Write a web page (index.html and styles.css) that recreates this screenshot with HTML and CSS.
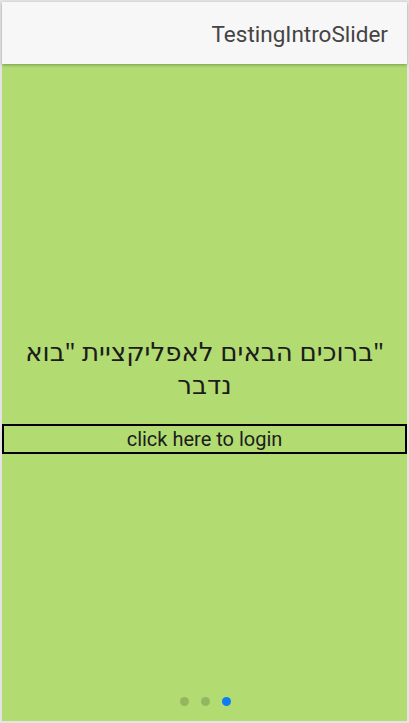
FILE: index.html
```html
<!DOCTYPE html>
<html lang="he">
<head>
<meta charset="utf-8">
<link rel="stylesheet" href="styles.css">
</head>
<body>
<div class="frame">
  <header class="appbar"><span class="title">TestingIntroSlider</span></header>
  <main class="slide">
    <div class="content">
      <p class="welcome" dir="rtl">"ברוכים הבאים לאפליקציית "בוא נדבר</p>
      <button class="login">click here to login</button>
    </div>
    <div class="dots">
      <span class="dot"></span><span class="dot"></span><span class="dot active"></span>
    </div>
  </main>
</div>
</body>
</html>
```

FILE: styles.css
```css
html, body { margin: 0; padding: 0; height: 100%; }
body { background: #fff; font-family: Roboto, "Noto Sans", sans-serif; }
.frame {
  box-sizing: border-box;
  width: 409px; height: 723px;
  border: 2px solid #e4e4e4;
  display: flex; flex-direction: column;
  background: #b2db72;
}
.appbar {
  height: 62px; flex: none;
  background: #f7f7f7;
  display: flex; align-items: center; justify-content: flex-end;
  padding-right: 19px;
  box-shadow: 0 1px 3px rgba(0,0,0,0.3);
  position: relative; z-index: 1;
}
.title { font-size: 22.5px; color: #444; padding-top: 2px; }
.slide {
  flex: 1; display: flex; flex-direction: column;
  position: relative;
}
.content {
  flex: 1; display: flex; flex-direction: column; justify-content: center;
  padding-top: 3px;
}
.welcome {
  margin: 0 0 23px; text-align: center;
  font-family: "Noto Sans", "DejaVu Sans", sans-serif;
  font-size: 26px; line-height: 33px; color: #1c1c1c;
  padding: 0 10px;
}
.login {
  box-sizing: border-box;
  display: block; width: 100%; height: 30px; margin: 0;
  background: transparent; border: 2px solid #000;
  font-family: Roboto, sans-serif; font-size: 20px; color: #1c1c1c;
  padding: 0;
}
.dots {
  position: absolute; left: 0; right: 0; bottom: 0;
  height: 40px; display: flex; justify-content: center; align-items: center; gap: 12px;
  padding-left: 1px;
}
.dot { width: 9px; height: 9px; border-radius: 50%; background: #95b660; }
.dot.active { background: #0c7ef4; }
```
